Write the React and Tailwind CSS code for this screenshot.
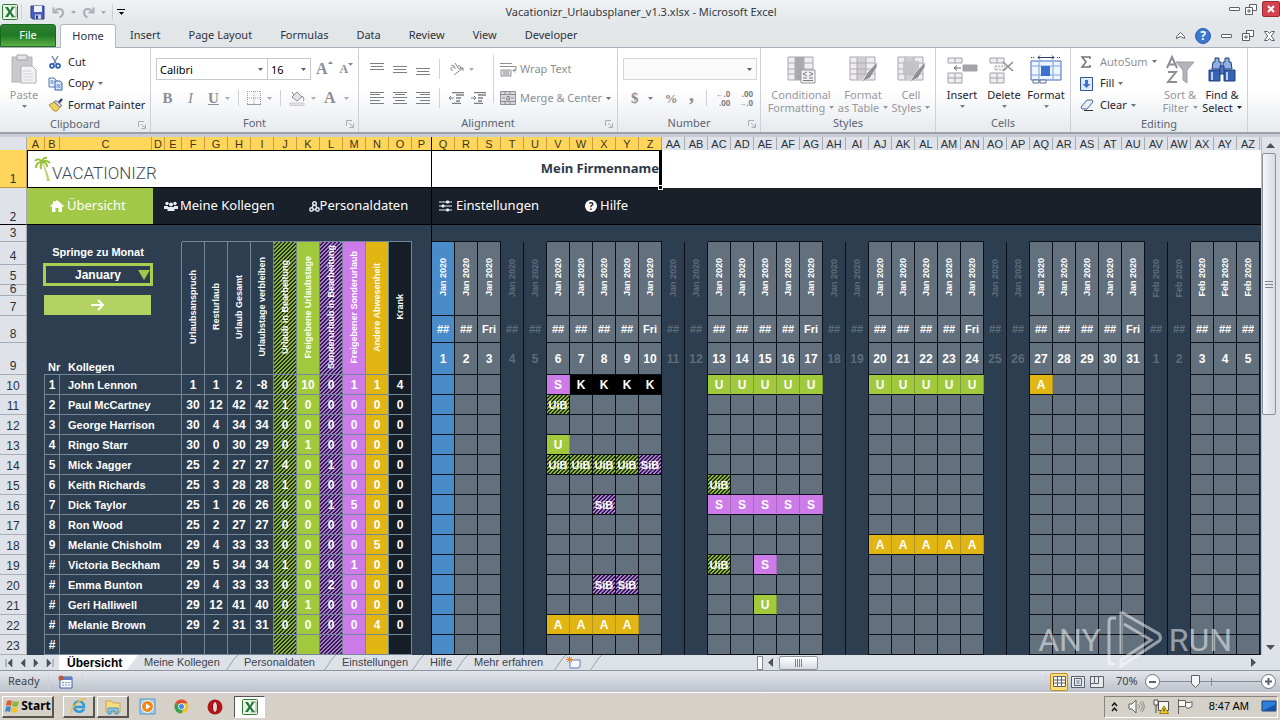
import React from 'react'
import clsx from 'clsx'

const TAB_NAMES = ['Insert', 'Page Layout', 'Formulas', 'Data', 'Review', 'View', 'Developer']

const LEFT_COLUMNS = [
  { letter: 'F', title: 'Urlaubsanspruch', bg: '' },
  { letter: 'G', title: 'Resturlaub', bg: '' },
  { letter: 'H', title: 'Urlaub Gesamt', bg: '' },
  { letter: 'I', title: 'Urlaubstage verbleiben', bg: '' },
  { letter: 'J', title: 'Urlaub in Bearbeitung', bg: 'bg-[linear-gradient(135deg,#8fb43a_25%,#22331f_25%,#22331f_50%,#8fb43a_50%,#8fb43a_75%,#22331f_75%)] bg-[size:4px_4px]' },
  { letter: 'K', title: 'Freigebene Urlaubstage', bg: 'bg-[#a1c93c]' },
  { letter: 'L', title: 'Sonderurlaub in Bearbeitung', bg: 'bg-[linear-gradient(135deg,#a57fcb_25%,#35194f_25%,#35194f_50%,#a57fcb_50%,#a57fcb_75%,#35194f_75%)] bg-[size:4px_4px]' },
  { letter: 'M', title: 'Freigebener Sonderurlaub', bg: 'bg-[#cc7be8]' },
  { letter: 'N', title: 'Andere Abwesenheit', bg: 'bg-[#e1b612]' },
  { letter: 'O', title: 'Krank', bg: 'bg-[#151e26]' },
]

const CODE_STYLES = {
  U: 'bg-[#a1c93c] border-r-[#7f9d3c]',
  S: 'bg-[#cc7be8] border-r-[#a56cbb]',
  A: 'bg-[#e1b612] border-r-[#b39425]',
  K: 'bg-black border-r-black',
  UiB: 'bg-[linear-gradient(135deg,#8fb43a_25%,#22331f_25%,#22331f_50%,#8fb43a_50%,#8fb43a_75%,#22331f_75%)] bg-[size:4px_4px] border-r-[#0b0f18]',
  SiB: 'bg-[linear-gradient(135deg,#a57fcb_25%,#35194f_25%,#35194f_50%,#a57fcb_50%,#a57fcb_75%,#35194f_75%)] bg-[size:4px_4px] border-r-[#0b0f18]',
}

// entries: [first day column, last day column, code]
const PEOPLE = [
  { nr: '1', name: 'John Lennon', values: [1, 1, 2, -8, 0, 10, 0, 1, 1, 4], entries: [[5, 5, 'S'], [6, 9, 'K'], [12, 16, 'U'], [19, 23, 'U'], [26, 26, 'A']] },
  { nr: '2', name: 'Paul McCartney', values: [30, 12, 42, 42, 1, 0, 0, 0, 0, 0], entries: [[5, 5, 'UiB']] },
  { nr: '3', name: 'George Harrison', values: [30, 4, 34, 34, 0, 0, 0, 0, 0, 0], entries: [] },
  { nr: '4', name: 'Ringo Starr', values: [30, 0, 30, 29, 0, 1, 0, 0, 0, 0], entries: [[5, 5, 'U']] },
  { nr: '5', name: 'Mick Jagger', values: [25, 2, 27, 27, 4, 0, 1, 0, 0, 0], entries: [[5, 8, 'UiB'], [9, 9, 'SiB']] },
  { nr: '6', name: 'Keith Richards', values: [25, 3, 28, 28, 1, 0, 0, 0, 0, 0], entries: [[12, 12, 'UiB']] },
  { nr: '7', name: 'Dick Taylor', values: [25, 1, 26, 26, 0, 0, 1, 5, 0, 0], entries: [[7, 7, 'SiB'], [12, 16, 'S']] },
  { nr: '8', name: 'Ron Wood', values: [25, 2, 27, 27, 0, 0, 0, 0, 0, 0], entries: [] },
  { nr: '9', name: 'Melanie Chisholm', values: [29, 4, 33, 33, 0, 0, 0, 0, 5, 0], entries: [[19, 23, 'A']] },
  { nr: '#', name: 'Victoria Beckham', values: [29, 5, 34, 34, 1, 0, 0, 1, 0, 0], entries: [[12, 12, 'UiB'], [14, 14, 'S']] },
  { nr: '#', name: 'Emma Bunton', values: [29, 4, 33, 33, 0, 0, 2, 0, 0, 0], entries: [[7, 8, 'SiB']] },
  { nr: '#', name: 'Geri Halliwell', values: [29, 12, 41, 40, 0, 1, 0, 0, 0, 0], entries: [[14, 14, 'U']] },
  { nr: '#', name: 'Melanie Brown', values: [29, 2, 31, 31, 0, 0, 0, 0, 4, 0], entries: [[5, 8, 'A']] },
  { nr: '#', name: '', values: ['', '', '', '', '', '', '', '', '', ''], entries: [] },
]

const DAYS = Array.from({ length: 36 }, (_, i) => {
  const weekday = (i + 2) % 7
  return {
    letter: i < 10 ? String.fromCharCode(81 + i) : 'A' + String.fromCharCode(55 + i),
    month: i < 31 ? 'Jan 2020' : 'Feb 2020',
    date: i < 31 ? i + 1 : i - 30,
    label: weekday === 4 ? 'Fri' : '##',
    weekend: weekday > 4,
    holiday: i === 0,
  }
})

const dayClass = (day) =>
  clsx(
    'border-r border-r-[#0b0f18] p-0 text-center',
    day.weekend && 'bg-[#2d3e50] text-[#5d6c7b]',
    !day.weekend && 'border-b border-b-[#0b0f18] text-white',
    !day.weekend && (day.holiday ? 'bg-[#4a8bca]' : 'bg-[#63707d]')
  )

/* ---------- small pieces ---------- */

const Caret = ({ className }) => (
  <svg viewBox="0 0 5 3" className={clsx('h-[3px] w-[5px] shrink-0', className)} fill="currentColor">
    <path d="M0 0h5L2.500 3z" />
  </svg>
)

const Divider = ({ className }) => <span className={clsx('w-px shrink-0 bg-[#cfd3d8]', className)} />

const Launcher = () => (
  <svg viewBox="0 0 8 8" className="h-2 w-2" fill="none" stroke="#a9adb3">
    <path d="M.5 6V.5H6M3 3l4 4M7.500 3.500v4h-4" />
  </svg>
)

const Group = ({ label, width, launcher, children }) => (
  <section aria-label={label} className={clsx('flex shrink-0 flex-col border-r border-[#cdd1d7]', width)}>
    <div className="flex h-[68px] pt-[3px]">{children}</div>
    <div className="relative flex h-[18px] items-center justify-center text-[#5b6471]">
      {label}
      {launcher && (
        <button aria-label={`${label} options`} className="absolute right-1 bottom-1">
          <Launcher />
        </button>
      )}
    </div>
  </section>
)

const BigButton = ({ icon, lines, width, muted, caretBelow }) => (
  <button className={clsx('flex shrink-0 flex-col items-center', width, muted ? 'text-[#94989e]' : 'text-[#1f252d]')}>
    <span className="flex h-[37px] items-center">{icon}</span>
    <span className="leading-[13px] whitespace-nowrap">{lines[0]}</span>
    {caretBelow ? (
      <Caret className="mt-1 text-[#777b82]" />
    ) : (
      <span className="flex items-center gap-1 leading-[13px] whitespace-nowrap">
        {lines[1]}
        <Caret />
      </span>
    )}
  </button>
)

const SmallButton = ({ icon, label, muted, caret }) => (
  <button className={clsx('flex h-[22px] items-center whitespace-nowrap', muted ? 'text-[#8b9096]' : 'text-[#1f252d]')}>
    <span className="flex w-5 items-center">{icon}</span>
    {label}
    {caret && <Caret className="ml-1 text-[#6b7078]" />}
  </button>
)

/* ---------- icons ---------- */

const ExcelIcon = () => (
  <svg viewBox="0 0 16 16" className="h-4 w-4">
    <rect x=".5" y=".5" width="15" height="15" rx="1" fill="#e9f4e6" stroke="#2e7d32" />
    <path d="M9 3h5v10H9" fill="#fff" stroke="#7fb57f" />
    <path d="M3 3h3l2 3.500L10 3h2.500L9.300 8l3.500 5H10L8 9.800 6 13H3l3.500-5z" fill="#1f7a34" />
  </svg>
)

const SaveIcon = () => (
  <svg viewBox="0 0 15 15" className="h-[15px] w-[15px]">
    <path d="M1 1h13v13H2.500L1 12.500z" fill="#4a5cc0" stroke="#2b3a8c" />
    <path d="M4 1h8v6H4z" fill="#eef2fb" />
    <path d="M5 9.500h6V14H5z" fill="#cdd5ea" />
    <path d="M6 10.500h2V14H6z" fill="#2b3a8c" />
  </svg>
)

const UndoIcon = ({ flip }) => (
  <svg viewBox="0 0 13 13" className={clsx('h-[13px] w-[13px]', flip && '-scale-x-100')} fill="none" stroke="#abafb5" strokeWidth="2">
    <path d="M3 5.500C5 2 11 2 11 6.500c0 2-1.500 4-3.500 5" />
    <path d="M1.500 1.500v5h5" />
  </svg>
)

const PasteIcon = () => (
  <svg viewBox="0 0 28 32" className="h-8 w-7">
    <path d="M2 3h20v25H2z" fill="#c9c9cd" stroke="#b2b2b6" />
    <path d="M7 1h10v5H7z" fill="#e3e3e5" stroke="#a5a5a9" />
    <path d="M11 12h11l4 4v13H11z" fill="#f4f4f6" stroke="#b0b0b4" />
    <path d="M13 17h8M13 20h10M13 23h10M13 26h10" stroke="#d0d0d4" />
  </svg>
)

const CutIcon = () => (
  <svg viewBox="0 0 14 14" className="h-[14px] w-[14px]" fill="none">
    <path d="M4 1l4.500 8M10 1L5.500 9" stroke="#7b8ba6" strokeWidth="1.500" />
    <circle cx="4" cy="10.800" r="2" stroke="#2c5fb3" strokeWidth="1.700" />
    <circle cx="10" cy="10.800" r="2" stroke="#2c5fb3" strokeWidth="1.700" />
  </svg>
)

const CopyIcon = () => (
  <svg viewBox="0 0 15 14" className="h-[14px] w-[15px]">
    <path d="M1 1h5l2 2v7H1z" fill="#eaf1fc" stroke="#4d78ba" />
    <path d="M7 4h5l2 2v7H7z" fill="#dbe8fb" stroke="#2f5fab" />
    <path d="M2.500 4h3M2.500 6h3M8.500 8h4M8.500 10h4" stroke="#4d78ba" />
  </svg>
)

const PainterIcon = () => (
  <svg viewBox="0 0 16 14" className="h-[14px] w-4">
    <path d="M1 7l5-3 6 5-3 4H6z" fill="#f0d060" stroke="#b58f2c" />
    <path d="M6 4l2-1.500 6 5L12 9z" fill="#d9d9e4" stroke="#7b7b90" />
    <path d="M11 4.500L14 1" stroke="#3f3f66" strokeWidth="2.500" />
  </svg>
)

const GridIcon = ({ brush, rules }) => (
  <svg viewBox="0 0 32 30" className="h-[30px] w-8">
    <path d="M3 2h25v23H3z" fill="#efedf0" stroke="#a9a7ad" />
    <path d="M10 2h9v23h-9z" fill={rules ? '#a9a9ad' : '#cfcdd2'} />
    <path d="M3 8h25M3 14h25M3 19h25M10 2v23M19 2v23" stroke="#aeacb2" />
    {brush && <path d="M8 6h16v13H8z" fill="#c3c2c7" />}
    {rules && (
      <g>
        <path d="M16 15h14v13H16z" fill="#f1f0f3" stroke="#99979d" />
        <path d="M22 17l-4 2 4 2M18 23h4M24 17l4 2-4 2M24 23h4M18 25.500h10" stroke="#7d7b82" fill="none" />
      </g>
    )}
    {!rules && <path d="M30 7L20 18l-5 9 8-4 7-11z" fill="#919096" stroke="#fff" strokeWidth=".6" />}
  </svg>
)

const InsertIcon = ({ remove }) => (
  <svg viewBox="0 0 32 28" className="h-7 w-8" fill="#efeef1" stroke="#a3a1a8">
    <path d="M2 2h14v5H2zM9 2v5M2 17h14v10H2zM9 17v10M2 22h14" />
    {remove ? (
      <g>
        <path d="M7 10h10v4H7z" strokeDasharray="2 1" />
        <path d="M15 6l10 9M25 6l-10 9" stroke="#8f8d94" strokeWidth="1.600" />
      </g>
    ) : (
      <g>
        <path d="M17 9h14v6H17z" fill="#a5a4a9" />
        <path d="M15 12H8M11 9.500L8 12l3 2.500" stroke="#66646c" fill="none" />
      </g>
    )}
  </svg>
)

const FormatIcon = () => (
  <svg viewBox="0 0 32 30" className="h-[30px] w-8">
    <path d="M1 2.500h4M27 2.500h4" stroke="#2d3f63" strokeDasharray="1 1" />
    <path d="M8 2.500h16M10 .5L8 2.500l2 2M22 .5l2 2-2 2" stroke="#2d3f63" fill="none" />
    <path d="M1 6h30v19H1z" fill="#eef5ff" stroke="#3f6fc0" />
    <path d="M1 11h30M1 20h30M9 6v19M23 6v19" stroke="#7ea3da" />
    <path d="M11 11h9v10h-9z" fill="#3b72d2" />
    <path d="M3 25h6v3H3zM10 25h6v3h-6z" fill="#fff" stroke="#5b6f96" />
  </svg>
)

const SortIcon = () => (
  <svg viewBox="0 0 30 30" className="h-[30px] w-[30px]" fill="none">
    <path d="M11 7h18l-7 8v13l-4-3V15z" fill="#b5b3b9" stroke="#9d9ba1" />
    <path d="M2 13L7 2l5 11M4 9.500h6M3 17h8L3 27h9" stroke="#8f8d94" strokeWidth="2" />
  </svg>
)

const FindIcon = () => (
  <svg viewBox="0 0 28 28" className="h-7 w-7" stroke="#203f7c">
    <path d="M7 2h4v4h2v7H4l1-7h2zM17 2h4v4h2l1 7h-9V6h2z" fill="#8fb0e4" />
    <path d="M1 14h11v11H1zM16 14h11v11H16z" fill="#3763b4" />
    <path d="M12 10h4v8h-4z" fill="#4c78c6" />
    <path d="M4 16v8M19 16v8" stroke="#b8cef2" strokeWidth="2" />
  </svg>
)

const LinesIcon = ({ rows }) => (
  <svg viewBox="0 0 14 12" className="h-3 w-[14px]" stroke="#7b7f85">
    {rows.map(([x, y, w]) => (
      <path key={y} d={`M${x} ${y}.5h${w}`} />
    ))}
  </svg>
)

const ALIGN_TOP = [
  [[0, 0, 14], [1, 3, 12], [0, 6, 14]],
  [[0, 3, 14], [1, 6, 12], [0, 9, 14]],
  [[0, 5, 14], [1, 8, 12], [0, 11, 14]],
]
const ALIGN_BOTTOM = [
  [[0, 0, 14], [0, 2, 10], [0, 5, 14], [0, 8, 10], [0, 11, 14]],
  [[0, 0, 14], [2, 2, 10], [0, 5, 14], [2, 8, 10], [0, 11, 14]],
  [[0, 0, 14], [4, 2, 10], [0, 5, 14], [4, 8, 10], [0, 11, 14]],
]

const IndentIcon = ({ out }) => (
  <svg viewBox="0 0 16 12" className="h-3 w-4" stroke="#7b7f85" fill="none">
    <path d="M3 .5h12M7 3h8M7 6h5M7 9h4M3 11.500h9" strokeWidth="1.300" />
    <path d={out ? 'M5 6H0M2 4L0 6l2 2' : 'M0 6h5M3 4l2 2-2 2'} />
  </svg>
)

const WindowButtons = () => (
  <>
    <button aria-label="Minimize" className="h-1 w-[11px] rounded-[1px] border border-[#5b6068] bg-white" />
    <button aria-label="Restore">
      <svg viewBox="0 0 12 11" className="h-[11px] w-3" fill="#fff" stroke="#5b6068">
        <path d="M4.500.5h7v6h-7z" />
        <path d="M.5 3.500h7v7h-7zM3 6h2v2H3z" />
      </svg>
    </button>
  </>
)

/* ---------- ribbon ---------- */

const TitleBar = () => (
  <header className="flex h-6 items-center bg-linear-to-b from-[#eff2f4] to-[#e3e7ea]">
    <div className="flex flex-1 items-center pl-[2px]">
      <ExcelIcon />
      <Divider className="mx-[3px] h-4 bg-[#9da2a8]" />
      <button aria-label="Save" className="ml-1 p-px"><SaveIcon /></button>
      <button aria-label="Undo" className="ml-[6px]"><UndoIcon /></button>
      <Caret className="ml-[6px] text-[#a4a8ad]" />
      <button aria-label="Redo" className="ml-[6px]"><UndoIcon flip /></button>
      <Caret className="ml-[6px] text-[#a4a8ad]" />
      <Divider className="ml-[6px] h-4 bg-[#9da2a8]" />
      <button aria-label="Customize toolbar" className="ml-1 flex flex-col items-center gap-[2px]">
        <span className="h-px w-2 bg-black" />
        <Caret className="text-black" />
      </button>
    </div>
    <h1 className="text-[#333a42]">Vacationizr_Urlaubsplaner_v1.3.xlsx - Microsoft Excel</h1>
    <div className="flex flex-1 items-center justify-end gap-[5px] self-start pt-px">
      <WindowButtons />
      <button aria-label="Close" className="flex h-4 w-[18px] items-center justify-center rounded-[2px] border border-[#9c2a33] bg-[#d5434e]">
        <svg viewBox="0 0 8 8" className="h-2 w-2" stroke="#fff" strokeWidth="2"><path d="M1 1l6 6M7 1L1 7" /></svg>
      </button>
    </div>
  </header>
)

const RibbonTabs = () => (
  <nav className="flex h-6 items-stretch border-b border-[#a9b0b9] bg-[#e2e6e9] text-[#2d333b]">
    <button className="mr-1 w-14 rounded-t-[3px] border border-[#1b6a22] bg-linear-to-b from-[#2c7f30] via-[#1f7a26] to-[#5cb044] text-white">File</button>
    <button className="-mb-px w-14 rounded-t-[3px] border border-b-0 border-[#b4bac2] bg-white">Home</button>
    {TAB_NAMES.map((name) => (
      <button key={name} className="px-[14px]">{name}</button>
    ))}
    <div className="ml-auto flex items-center gap-[10px] pr-[5px]">
      <button aria-label="Collapse ribbon">
        <svg viewBox="0 0 9 7" className="h-[7px] w-[9px]" fill="#fff" stroke="#5b6068"><path d="M.5 4.500l4-4 4 4v2l-4-2-4 2z" /></svg>
      </button>
      <button aria-label="Help" className="flex h-4 w-4 items-center justify-center rounded-full border border-[#2a5db0] bg-[#3c76cf] text-xs leading-none font-bold text-white">?</button>
      <WindowButtons />
      <button aria-label="Close workbook">
        <svg viewBox="0 0 11 10" className="h-[10px] w-[11px]" fill="#fff" stroke="#5b6068">
          <path d="M.5.5h3l2 2 2-2h3L7.300 5l3.200 4.500h-3l-2-2-2 2h-3L3.700 5z" />
        </svg>
      </button>
    </div>
  </nav>
)

const serifGlyph = "font-['Liberation_Serif',serif] leading-none text-[#8a8e94]"

const Ribbon = () => (
  <div className="flex h-[86px] overflow-hidden border-b-2 border-[#9aa0aa] bg-linear-to-b from-white via-white to-[#e6eaee]">
    <Group label="Clipboard" width="w-[151px]" launcher>
      <BigButton icon={<PasteIcon />} lines={['Paste']} width="w-12" muted caretBelow />
      <div className="flex flex-col">
        <SmallButton icon={<CutIcon />} label="Cut" />
        <SmallButton icon={<CopyIcon />} label="Copy" caret />
        <SmallButton icon={<PainterIcon />} label="Format Painter" />
      </div>
    </Group>

    <Group label="Font" width="w-[208px]" launcher>
      <div className="flex flex-1 flex-col pt-[7px] pl-[5px]">
        <div className="flex h-[22px] items-center">
          <label className="relative flex">
            <input aria-label="Font name" defaultValue="Calibri" className="h-[22px] w-[112px] border border-[#c6cad0] bg-white px-[3px] text-black" />
            <Caret className="absolute top-[10px] right-[5px] text-[#5b6068]" />
          </label>
          <label className="relative -ml-px flex">
            <input aria-label="Font size" defaultValue="16" className="h-[22px] w-11 border border-[#c6cad0] bg-white px-[3px] text-black" />
            <Caret className="absolute top-[10px] right-[5px] text-[#5b6068]" />
          </label>
          <button aria-label="Grow font" className={clsx('ml-[5px] flex text-base font-bold', serifGlyph)}>
            A<Caret className="rotate-180" />
          </button>
          <button aria-label="Shrink font" className={clsx('ml-[7px] flex text-xs font-bold', serifGlyph)}>
            A<Caret />
          </button>
        </div>
        <div className="mt-2 flex h-5 items-center">
          <button className={clsx('w-[23px] text-[15px] font-bold', serifGlyph)}>B</button>
          <button className={clsx('w-[23px] text-[15px] italic', serifGlyph)}>I</button>
          <button className={clsx('w-[23px] text-[15px] font-bold underline', serifGlyph)}>U</button>
          <Caret className="text-[#a9adb2]" />
          <Divider className="mx-[8px] h-4" />
          <button aria-label="Borders">
            <svg viewBox="0 0 14 14" className="h-[14px] w-[14px]" stroke="#9b9fa5" fill="none">
              <path d="M.5 0v14M7 0v14M13.500 0v14M0 .5h14M0 7h14" strokeDasharray="1 1" />
              <path d="M0 13.500h14" />
            </svg>
          </button>
          <Caret className="ml-[6px] text-[#a9adb2]" />
          <Divider className="mx-[8px] h-4" />
          <button aria-label="Fill color">
            <svg viewBox="0 0 16 15" className="h-[15px] w-4" stroke="#8d9197" fill="#e4e4e8">
              <path d="M3 6l5-5 5 5-5 4zM5 4L3 1M13 5c2 1 2 3 1.500 5" />
              <path d="M1 12h14v2.500H1z" fill="#e1e1e4" stroke="#d0d0d4" />
            </svg>
          </button>
          <Caret className="ml-[6px] text-[#a9adb2]" />
          <button aria-label="Font color" className={clsx('ml-2 text-base font-bold', serifGlyph)}>A</button>
          <Caret className="ml-2 text-[#a9adb2]" />
        </div>
      </div>
    </Group>

    <Group label="Alignment" width="w-[259px]" launcher>
      <div className="flex flex-col pt-[7px] pl-[11px]">
        <div className="flex h-[22px] items-center gap-[9px]">
          {ALIGN_TOP.map((rows, i) => (
            <button key={i} aria-label={['Top', 'Middle', 'Bottom'][i]}><LinesIcon rows={rows} /></button>
          ))}
          <Divider className="h-5" />
          <button aria-label="Orientation" className="flex items-center gap-1">
            <svg viewBox="0 0 16 14" className="h-[14px] w-4" fill="none" stroke="#85898f">
              <path d="M2 4c2-2 4 0 4 3M5 5c-4 0-4 4-1 3M6 1l4 6c3 0 2-4-1-3M5 13l9-7M11 6h3v3" />
            </svg>
            <Caret className="text-[#a9adb2]" />
          </button>
        </div>
        <div className="mt-2 flex h-5 items-center gap-[9px]">
          {ALIGN_BOTTOM.map((rows, i) => (
            <button key={i} aria-label={['Left', 'Center', 'Right'][i]}><LinesIcon rows={rows} /></button>
          ))}
          <Divider className="h-5" />
          <button aria-label="Decrease indent"><IndentIcon out /></button>
          <button aria-label="Increase indent" className="-ml-[3px]"><IndentIcon /></button>
        </div>
      </div>
      <Divider className="mt-1 ml-[6px] h-12" />
      <div className="flex flex-col pt-[7px] pl-[6px]">
        <SmallButton
          muted
          label="Wrap Text"
          icon={
            <svg viewBox="0 0 17 15" className="h-[15px] w-[17px]" fill="#e4e4e8" stroke="#8d9197">
              <path d="M1 8h10v6H1zM3 10h6M3 12h6" />
              <path d="M0 1.500h12M0 4.500h16v4h-3M15 6.500l-2 2 2 2" fill="none" />
            </svg>
          }
        />
        <div className="mt-[7px]">
          <SmallButton
            muted
            caret
            label="Merge & Center"
            icon={
              <svg viewBox="0 0 16 14" className="h-[14px] w-4" fill="#d8d8dc" stroke="#8d9197">
                <path d="M.5.5h15v13H.5zM.5 3.500h15M.5 10.500h15M5 .5v3M10 .5v3M5 10.500v3M10 10.500v3M2 7h3M11 7h3M6.500 5.500h3V9h-3V7h3" />
              </svg>
            }
          />
        </div>
      </div>
    </Group>

    <Group label="Number" width="w-[143px]" launcher>
      <div className="flex flex-1 flex-col px-[5px] pt-[7px]">
        <label className="relative flex">
          <input aria-label="Number format" className="h-[22px] w-[134px] border border-[#d3d6da] bg-[#fafafa] px-1" />
          <Caret className="absolute top-[10px] right-[5px] text-[#5b6068]" />
        </label>
        <div className="mt-2 flex h-5 items-center text-[#7b7f85]">
          <button className={clsx('ml-2 text-[15px] font-bold', serifGlyph)}>$</button>
          <Caret className="ml-[9px]" />
          <button className={clsx('ml-3 text-[13px] font-bold', serifGlyph)}>%</button>
          <button className={clsx('ml-[9px] w-[10px] pb-2 text-xl font-bold', serifGlyph)}>,</button>
          <Divider className="mx-[9px] h-4" />
          <button className="text-right text-[8px] leading-[9px] font-bold">
            <span className="block">←.0</span>
            <span className="block">.00</span>
          </button>
          <button className="ml-2 text-right text-[8px] leading-[9px] font-bold">
            <span className="block">.00</span>
            <span className="block">→.0</span>
          </button>
        </div>
      </div>
    </Group>

    <Group label="Styles" width="w-[175px]">
      <div className="flex pl-1">
        <BigButton icon={<GridIcon rules />} lines={['Conditional', 'Formatting']} width="w-[72px]" muted />
        <BigButton icon={<GridIcon />} lines={['Format', 'as Table']} width="w-[52px]" muted />
        <BigButton icon={<GridIcon brush />} lines={['Cell', 'Styles']} width="w-11" muted />
      </div>
    </Group>

    <Group label="Cells" width="w-[135px]">
      <div className="flex pl-[5px]">
        <BigButton icon={<InsertIcon />} lines={['Insert']} width="w-[42px]" caretBelow />
        <BigButton icon={<InsertIcon remove />} lines={['Delete']} width="w-[42px]" caretBelow />
        <BigButton icon={<FormatIcon />} lines={['Format']} width="w-[42px]" caretBelow />
      </div>
    </Group>

    <Group label="Editing" width="w-[177px]">
      <div className="flex w-[88px] flex-col pl-[9px]">
        <SmallButton
          muted
          caret
          label="AutoSum"
          icon={<svg viewBox="0 0 12 12" className="h-3 w-3" fill="none" stroke="#6f737a" strokeWidth="1.500"><path d="M10 3V1H2l4 5-4 5h8V9" /></svg>}
        />
        <SmallButton
          caret
          label="Fill"
          icon={
            <svg viewBox="0 0 14 14" className="h-[14px] w-[14px]">
              <path d="M.5.5h12v13H.5z" fill="#dfeafb" stroke="#2e5799" />
              <path d="M5 3h3v4h2.500l-4 4-4-4H5z" fill="#3a74d0" />
            </svg>
          }
        />
        <SmallButton
          caret
          label="Clear"
          icon={
            <svg viewBox="0 0 14 12" className="h-3 w-[14px]">
              <path d="M1 8l6-7h5l1 2-6 7H2z" fill="#e6eefa" stroke="#4a6390" />
              <path d="M4 11.500h9" stroke="#333" />
            </svg>
          }
        />
      </div>
      <BigButton icon={<SortIcon />} lines={['Sort &', 'Filter']} width="w-[42px]" muted />
      <BigButton icon={<FindIcon />} lines={['Find &', 'Select']} width="w-[42px]" />
    </Group>
  </div>
)

/* ---------- sheet ---------- */

const colHead = (selected) =>
  clsx(
    'h-[13px] border-r p-0 text-[11px] leading-[12px] font-normal',
    selected ? 'border-[#c79d3b] bg-[#ffd65c] text-[#3f3417]' : 'border-[#a7adb5] bg-[#dfe3e9] text-[#2b3138]'
  )

const RowHead = ({ n, size = 'h-5 leading-[11px]', selected, last }) => (
  <th
    scope="row"
    className={clsx(
      'border-r border-b px-0 pt-0 pb-[2px] align-bottom text-xs font-normal text-[#2b3138]',
      size,
      selected ? 'border-[#c79d3b] bg-[#ffd65c]' : 'border-[#a7adb5] bg-[#dfe3e9]',
      last && 'border-b-black'
    )}
  >
    {n}
  </th>
)

const Vertical = ({ children }) => (
  <span className="inline-block rotate-180 text-[9px] leading-[14px] font-bold whitespace-nowrap [writing-mode:vertical-rl]">
    {children}
  </span>
)

const NavItem = ({ label, icon, className }) => (
  <a href="#" className={clsx('flex h-full items-center text-white', className)}>
    {icon}
    {label}
  </a>
)

const PalmLogo = () => (
  <span className="flex h-9 items-end pl-[6px]">
    <svg viewBox="0 0 18 26" className="mb-[5px] h-[26px] w-[18px]" fill="none" stroke="#9ac23c" strokeWidth="2">
      <path d="M8 7c2 5 4 9 5 18l3 0C14 18 12 12 9 7z" fill="#b9d46c" stroke="none" />
      <path d="M8 6C5 2 3 3 1 5M8 6C4 6 2 8 2 12M8 6c-1 2-2 4-1 7M8 6c0-3 3-5 5-4M8 6c3-2 6-1 8 1M8 6c3 0 5 2 5 5" />
    </svg>
    <span className="mb-[3px] font-['Roboto',sans-serif] text-[17px] leading-[22px] font-light text-[#3f4955]">VACATIONIZR</span>
  </span>
)

const Sheet = () => (
  <table className="w-full table-fixed border-separate border-spacing-0 bg-[#2d3e50] font-['Liberation_Sans',sans-serif]">
    <colgroup>
      <col className="w-[27px]" />
      <col className="w-[18px]" />
      <col className="w-[15px]" />
      <col className="w-[92px]" />
      <col className="w-[13px]" />
      <col className="w-[17px]" />
      {LEFT_COLUMNS.map((c) => <col key={c.letter} className="w-[23px]" />)}
      <col className="w-5" />
      {DAYS.map((d) => <col key={d.letter} className="w-[23px]" />)}
      <col />
    </colgroup>
    <thead>
      <tr>
        <td className="border-r border-[#a7adb5] bg-[#dfe3e9] p-0" />
        {['A', 'B', 'C', 'D', 'E'].map((l) => <th key={l} className={colHead(true)}>{l}</th>)}
        {LEFT_COLUMNS.map((c) => <th key={c.letter} className={colHead(true)}>{c.letter}</th>)}
        <th className={clsx(colHead(true), 'border-r-black')}>P</th>
        {DAYS.map((d, i) => <th key={d.letter} className={colHead(i < 10)}>{d.letter}</th>)}
        <td className="bg-[#dfe3e9] p-0" />
      </tr>
    </thead>
    <tbody>
      <tr>
        <RowHead n="1" size="h-[38px] leading-[11px]" selected />
        <td colSpan={16} className="border border-black bg-white p-0"><PalmLogo /></td>
        <td colSpan={10} className="relative border-y border-r-[3px] border-black bg-white p-0 text-right font-['Noto_Sans',sans-serif] text-[13px] font-bold text-[#2d3a4a]">
          Mein Firmenname
          <span className="absolute -right-[4px] -bottom-[3px] h-[5px] w-[5px] border border-white bg-black" />
        </td>
        <td colSpan={27} className="bg-white p-0" />
      </tr>
      <tr className="bg-[#19202a] font-['Noto_Sans',sans-serif] text-[13px]">
        <RowHead n="2" size="h-[37px] leading-[11px]" last />
        <td colSpan={16} className="border-r border-b border-black p-0">
          <nav className="flex h-9">
            <NavItem
              label="Übersicht"
              className="w-[126px] gap-[3px] bg-[#a1c846] pl-[23px]"
              icon={<svg viewBox="0 0 14 12" className="h-3 w-[14px]" fill="#fff"><path d="M7 0l7 6-1 1-1-.8V12H8.500V8h-3v4H2V6.200L1 7 0 6l3-2.500V1h1.500v1.200z" /></svg>}
            />
            <NavItem
              label="Meine Kollegen"
              className="gap-[2px] pl-[11px]"
              icon={
                <svg viewBox="0 0 14 10" className="h-[10px] w-[14px]" fill="#e8edf2">
                  <circle cx="3" cy="2.500" r="1.700" /><circle cx="11" cy="2.500" r="1.700" /><circle cx="7" cy="3.500" r="2" />
                  <path d="M0 5h4v3H0zM10 5h4v3h-4zM3.500 6h7v4h-7z" />
                </svg>
              }
            />
            <NavItem
              label="Personaldaten"
              className="pl-[34px]"
              icon={
                <svg viewBox="0 0 11 11" className="h-[11px] w-[11px]" fill="none" stroke="#e8edf2" strokeWidth="1.400">
                  <circle cx="5.500" cy="2.500" r="1.800" /><circle cx="2.500" cy="8.500" r="1.700" /><circle cx="8.500" cy="8.500" r="1.700" />
                  <path d="M4.500 4L3 7M6.500 4L8 7M4 8.500h3" />
                </svg>
              }
            />
          </nav>
        </td>
        <td colSpan={37} className="border-b border-black p-0">
          <nav className="flex h-9 pl-[7px]">
            <NavItem
              label="Einstellungen"
              className="gap-1"
              icon={
                <svg viewBox="0 0 13 12" className="h-3 w-[13px]" fill="#e8edf2" stroke="#e8edf2">
                  <path d="M0 2h13M0 6h13M0 10h13" /><path d="M7.500 1h2v2h-2zM3 5h2v2H3zM7.500 9h2v2h-2z" />
                </svg>
              }
            />
            <NavItem
              label="Hilfe"
              className="gap-[3px] pl-[46px]"
              icon={<span className="flex h-3 w-3 items-center justify-center rounded-full bg-white text-[10px] leading-none font-bold text-[#19202a]">?</span>}
            />
          </nav>
        </td>
      </tr>
      <tr>
        <RowHead n="3" size="h-[17px] leading-[11px]" />
        <td colSpan={5} className="p-0" />
        {LEFT_COLUMNS.map((c) => <td key={c.letter} className="border-b border-[#74869a] p-0" />)}
        <td className="border-r border-r-black p-0" />
        {DAYS.map((d) => <td key={d.letter} className={clsx('p-0', !d.weekend && 'border-b border-[#0b0f18]')} />)}
        <td className="p-0" />
      </tr>
      <tr>
        <RowHead n="4" size="h-[23px] leading-[11px]" />
        <td colSpan={5} rowSpan={6} className="border-r border-[#74869a] p-0 align-top text-white">
          <div className="flex h-[133px] flex-col pt-[3px] text-[11px] font-bold">
            <label htmlFor="month" className="ml-4 w-[110px] text-center leading-[15px]">Springe zu Monat</label>
            <div className="relative mt-[3px] ml-4 w-[110px]">
              <select id="month" defaultValue="January" className="h-[23px] w-full appearance-none border-[3px] border-[#a9cf52] bg-[#2d3e50] text-center text-xs leading-none font-bold text-white">
                <option>January</option>
                <option>February</option>
                <option>March</option>
              </select>
              <svg viewBox="0 0 12 10" className="pointer-events-none absolute top-[7px] right-[3px] h-[10px] w-3" fill="#a1c846"><path d="M0 0h12L6 10z" /></svg>
            </div>
            <button aria-label="Go to month" className="mt-[9px] ml-[17px] flex h-5 w-[107px] items-center justify-center bg-[#b1d263]">
              <svg viewBox="0 0 14 12" className="h-3 w-[14px]" fill="none" stroke="#fff" strokeWidth="2"><path d="M0 6h12M7 1l5 5-5 5" /></svg>
            </button>
            <div className="mt-auto ml-[17px] flex border-b border-[#74869a] pl-1 leading-[14px]">
              <span className="w-5">Nr</span>
              <span>Kollegen</span>
            </div>
          </div>
        </td>
        {LEFT_COLUMNS.map((c) => (
          <td key={c.letter} rowSpan={6} className={clsx('border-r border-b border-[#74869a] p-0 text-center leading-none text-white', c.bg)}>
            <Vertical>{c.title}</Vertical>
          </td>
        ))}
        <td rowSpan={20} className="border-r border-black p-0" />
        {DAYS.map((d) => (
          <td key={d.letter} rowSpan={4} className={clsx(dayClass(d), 'leading-none')}>
            <Vertical>{d.month}</Vertical>
          </td>
        ))}
        <td className="p-0" />
      </tr>
      <tr><RowHead n="5" /></tr>
      <tr><RowHead n="6" size="h-[11px] leading-[8px]" /></tr>
      <tr><RowHead n="7" /></tr>
      <tr className="text-[11px] font-bold">
        <RowHead n="8" size="h-[27px] leading-[11px]" />
        {DAYS.map((d) => <td key={d.letter} className={dayClass(d)}>{d.label}</td>)}
      </tr>
      <tr className="text-xs font-bold">
        <RowHead n="9" size="h-[32px] leading-[11px]" />
        {DAYS.map((d) => <td key={d.letter} className={dayClass(d)}>{d.date}</td>)}
      </tr>
      {PEOPLE.map((p, r) => (
        <tr key={r} className="text-xs leading-[18px] font-bold text-white">
          <RowHead n={r + 10} />
          <td className="border-r border-[#74869a] p-0" />
          <td className="border-r border-b border-[#74869a] p-0 text-center">{p.nr}</td>
          <td colSpan={3} className="border-r border-b border-[#74869a] p-0 pl-2 text-[11px]">{p.name}</td>
          {LEFT_COLUMNS.map((c, i) => (
            <td key={c.letter} className={clsx('border-r border-b border-[#74869a] p-0 text-center', c.bg)}>{p.values[i]}</td>
          ))}
          {DAYS.map((d, i) => {
            const entry = p.entries.find(([from, to]) => i >= from && i <= to)
            if (!entry) return <td key={d.letter} className={dayClass(d)} />
            return (
              <td
                key={d.letter}
                className={clsx('border-r border-b border-b-[#0b0f18] p-0 text-center', CODE_STYLES[entry[2]], entry[2].length > 1 && 'text-[11px]')}
              >
                {entry[2]}
              </td>
            )
          })}
        </tr>
      ))}
    </tbody>
  </table>
)

const VerticalScroll = () => (
  <div className="flex w-[19px] shrink-0 flex-col border-l border-[#b9bec6] bg-[#dfe3e9] text-[#4d525a]">
    <button aria-label="Scroll up" className="flex h-4 items-center pl-1">
      <svg viewBox="0 0 9 5" className="h-[5px] w-[9px]" fill="currentColor"><path d="M4.500 0L9 5H0z" /></svg>
    </button>
    <div className="flex h-[262px] w-[14px] flex-col items-center justify-center gap-[2px] rounded-[2px] border border-[#8d939c] bg-linear-to-r from-[#f5f6f9] to-[#d7dbe3]">
      {[0, 1, 2].map((i) => <span key={i} className="h-px w-2 bg-[#80858d]" />)}
    </div>
    <button aria-label="Scroll down" className="mt-auto flex h-4 items-center pl-1">
      <svg viewBox="0 0 9 5" className="h-[5px] w-[9px]" fill="currentColor"><path d="M0 0h9L4.500 5z" /></svg>
    </button>
  </div>
)

const Slash = () => (
  <svg viewBox="0 0 12 15" className="h-[15px] w-3 shrink-0" stroke="#9ba1aa" fill="none"><path d="M12 0L8 4 2 13l-2 2" /></svg>
)

const SHEETS = [
  { name: 'Meine Kollegen', width: 'w-[100px]' },
  { name: 'Personaldaten', width: 'w-[98px]' },
  { name: 'Einstellungen', width: 'w-[88px]' },
  { name: 'Hilfe', width: 'w-11' },
  { name: 'Mehr erfahren', width: 'w-[98px]' },
]

const ARROWS = [
  { label: 'First sheet', d: 'M1 0v8M7 0v8L3 4z' },
  { label: 'Previous sheet', d: 'M6 0v8L2 4z' },
  { label: 'Next sheet', d: 'M2 0v8l4-4z' },
  { label: 'Last sheet', d: 'M7 0v8M1 0v8l4-4z' },
]

const SheetTabs = () => (
  <div className="flex h-4 items-stretch border-b border-[#8e949d] bg-[#dde2e8] font-['Liberation_Sans',sans-serif] text-[#3d434b]">
    <div className="flex w-[59px] shrink-0 items-center justify-around pr-[2px] pl-[2px]">
      {ARROWS.map((a) => (
        <button key={a.label} aria-label={a.label}>
          <svg viewBox="0 0 8 8" className="h-2 w-2" fill="#4d525a" stroke="#4d525a" strokeWidth=".6"><path d={a.d} /></svg>
        </button>
      ))}
    </div>
    <button className="flex w-[79px] items-center justify-between bg-white pl-2 text-xs font-bold text-black [clip-path:polygon(0_0,100%_0,86%_100%,0_100%)]">
      Übersicht
    </button>
    {SHEETS.map((s) => (
      <button key={s.name} className={clsx('flex items-center justify-between pl-[6px] whitespace-nowrap', s.width)}>
        {s.name}
        <Slash />
      </button>
    ))}
    <button aria-label="New sheet" className="flex items-center gap-2">
      <svg viewBox="0 0 16 13" className="h-[13px] w-4">
        <path d="M4 4h10v7l-2 1H4z" fill="#f5f8fd" stroke="#6580ad" />
        <path d="M3.500 0v7M0 3.500h7M1 1l5 5M6 1L1 6" stroke="#e08a2c" />
      </svg>
      <Slash />
    </button>
    <div className="ml-auto flex w-[523px] items-center">
      <span className="h-[14px] w-[6px] border border-[#80858d] bg-white" />
      <button aria-label="Scroll left" className="ml-1 px-px">
        <svg viewBox="0 0 5 9" className="h-[9px] w-[5px]" fill="#4d525a"><path d="M5 0v9L0 4.500z" /></svg>
      </button>
      <span className="ml-[5px] flex h-[14px] w-[39px] items-center justify-center gap-px rounded-[2px] border border-[#8d939c] bg-linear-to-b from-white to-[#d7dbe3]">
        {[0, 1, 2, 3].map((i) => <span key={i} className="h-2 w-px bg-[#80858d]" />)}
      </span>
      <button aria-label="Scroll right" className="mr-6 ml-auto">
        <svg viewBox="0 0 5 9" className="h-[9px] w-[5px]" fill="#4d525a"><path d="M0 0v9l5-4.500z" /></svg>
      </button>
    </div>
  </div>
)

const StatusBar = () => (
  <div className="flex h-[22px] items-center border-b border-white bg-linear-to-b from-[#e3e6eb] to-[#bcc1cb] text-[#3d434b]">
    <span className="w-12 pl-2">Ready</span>
    <Divider className="h-4 bg-[#9aa0aa]" />
    <button aria-label="Record macro" className="mx-[9px]">
      <svg viewBox="0 0 15 14" className="h-[14px] w-[15px]">
        <path d="M2 2h12v11H2z" fill="#f5f8fd" stroke="#4463a5" />
        <path d="M2 2h12v3H2z" fill="#5c7fc6" />
        <path d="M4 7.500h8M4 10h8" stroke="#7b93c4" strokeDasharray="2 1" />
        <circle cx="3" cy="3" r="2.500" fill="#b8583c" />
      </svg>
    </button>
    <Divider className="h-4 bg-[#9aa0aa]" />
    <div className="ml-auto flex items-center pr-1">
      <Divider className="mr-1 h-4 bg-[#8e949d]" />
      <button aria-label="Normal view" className="flex h-[18px] w-[18px] items-center justify-center rounded-[2px] border border-[#c08d28] bg-[#ffdf7a]">
        <svg viewBox="0 0 13 11" className="h-[11px] w-[13px]" fill="#fff" stroke="#5a6270"><path d="M.5.5h12v10H.5zM.5 4h12M.5 7h12M4.500.5v10M8.500.5v10" /></svg>
      </button>
      <button aria-label="Page layout view" className="ml-[3px]">
        <svg viewBox="0 0 14 12" className="h-3 w-[14px]" fill="#e6e8ec" stroke="#5a6270"><path d="M.5.5h13v11H.5zM3.500 2.500h7v7h-7zM5.500 5h3M5.500 7h3" /></svg>
      </button>
      <button aria-label="Page break view" className="ml-[5px]">
        <svg viewBox="0 0 14 12" className="h-3 w-[14px]" fill="#e6e8ec" stroke="#5a6270"><path d="M.5.5h13v11H.5zM.5.5h4v7h-4zM4.500.5h4v7h-4z" /></svg>
      </button>
      <span className="ml-3 w-[29px]">70%</span>
      <button aria-label="Zoom out" className="flex h-[15px] w-[15px] items-center justify-center rounded-full border border-[#70757d] bg-white">
        <span className="h-[2px] w-[7px] bg-[#5a6270]" />
      </button>
      <div className="relative flex h-[14px] w-[101px] items-center">
        <span className="h-px w-full bg-[#858b94]" />
        <span className="absolute top-[3px] left-1/2 h-2 w-px bg-[#858b94]" />
        <input type="range" aria-label="Zoom" defaultValue="34" className="absolute inset-0 w-full opacity-0" />
        <svg viewBox="0 0 9 13" className="pointer-events-none absolute left-[31px] h-[13px] w-[9px]" fill="#f4f5f7" stroke="#5a6270"><path d="M.5.5h8v8l-4 4-4-4z" /></svg>
      </div>
      <button aria-label="Zoom in" className="flex h-[15px] w-[15px] items-center justify-center rounded-full border border-[#70757d] bg-white">
        <svg viewBox="0 0 7 7" className="h-[7px] w-[7px]" stroke="#5a6270" strokeWidth="2"><path d="M0 3.500h7M3.500 0v7" /></svg>
      </button>
    </div>
  </div>
)

const raised = 'flex h-[22px] items-center justify-center border-t border-l border-r-2 border-b-2 border-t-white border-l-white border-r-[#57544e] border-b-[#57544e]'

const Taskbar = () => (
  <footer className="flex h-[27px] items-center bg-[#d5d1c8] font-['Liberation_Sans',sans-serif] text-black">
    <button className={clsx(raised, "ml-[2px] w-[52px] gap-px font-['Noto_Sans',sans-serif] text-xs font-bold")}>
      <svg viewBox="0 0 16 15" className="h-[15px] w-4 shrink-0">
        <path d="M3 2c2-1 3-1 5 0L7 7c-2-1-3-1-5 0z" fill="#e5582b" />
        <path d="M9 2c2 1 4 1 6 0l-1 5c-2 1-4 1-6 0z" fill="#86b93c" />
        <path d="M2 8c2-1 3-1 5 0l-1 5c-2-1-3-1-5 0z" fill="#3f86d2" />
        <path d="M8 8c2 1 4 1 6 0l-1 5c-2 1-4 1-6 0z" fill="#f2c230" />
      </svg>
      Start
    </button>
    <button aria-label="Internet Explorer" className={clsx(raised, 'ml-[9px] w-8')}>
      <svg viewBox="0 0 18 18" className="h-[18px] w-[18px]" fill="none">
        <path d="M14 12c-2 4-9 4-10-2-.5-7 10-8 10 0H5" stroke="#2f9be0" strokeWidth="2.500" />
        <path d="M2 16c-3-3 8-15 14-14" stroke="#f0bd34" strokeWidth="1.500" />
      </svg>
    </button>
    <button aria-label="Explorer" className={clsx(raised, 'ml-[2px] w-8')}>
      <svg viewBox="0 0 18 17" className="h-[17px] w-[18px]">
        <path d="M2 3h5l2 2h7v9H2z" fill="#f7dc83" stroke="#c9a248" />
        <path d="M4 10h10v6h-3v-3H7v3H4z" fill="#8cc4e8" stroke="#4f93bd" />
      </svg>
    </button>
    <button aria-label="Media Player" className="ml-[10px]">
      <svg viewBox="0 0 17 17" className="h-[17px] w-[17px]">
        <path d="M1 1h15v15H1z" fill="#9ecdf0" stroke="#5c95c4" />
        <circle cx="8.500" cy="8.500" r="6" fill="#f08a1d" stroke="#fff" />
        <path d="M7 5.500v6l4.500-3z" fill="#fff" />
      </svg>
    </button>
    <button aria-label="Chrome" className="ml-[18px]">
      <svg viewBox="0 0 16 16" className="h-[15px] w-[15px]">
        <circle cx="8" cy="8" r="7.500" fill="#f4c430" />
        <path d="M8 8L1.500 4.200A7.500 7.500 0 0114.500 4.500H8z" fill="#dd4b39" />
        <path d="M8 8L1.500 4.200A7.500 7.500 0 007.500 15.500L10.500 10z" fill="#35a156" />
        <circle cx="8" cy="8" r="3.500" fill="#fff" /><circle cx="8" cy="8" r="2.700" fill="#4285f4" />
      </svg>
    </button>
    <button aria-label="Opera" className="ml-[18px]">
      <svg viewBox="0 0 16 16" className="h-4 w-4"><circle cx="8" cy="8" r="7.500" fill="#b3151b" /><ellipse cx="8" cy="8" rx="2.500" ry="5.500" fill="#e9d5d3" stroke="#7d0b10" /></svg>
    </button>
    <button aria-label="Excel" className="ml-[11px] flex h-[22px] w-[31px] items-center justify-center border border-t-[#57544e] border-r-white border-b-white border-l-[#57544e] bg-white">
      <ExcelIcon />
    </button>
    <div className="mr-[2px] ml-auto flex h-[22px] items-center border border-t-[#88857e] border-r-white border-b-white border-l-[#88857e] pl-[6px] text-[11px]">
      <svg viewBox="0 0 7 10" className="h-[10px] w-[7px]" fill="none" stroke="#111" strokeWidth="1.400"><path d="M1 4l2.500-3L6 4M1 9l2.500-3L6 9" /></svg>
      <svg viewBox="0 0 17 15" className="ml-[10px] h-[15px] w-[17px]" fill="#f6f6f4" stroke="#63625f"><path d="M1 5h3l4-4v13l-4-4H1z" /><path d="M10 5c2 2 2 3 0 5M12 3c3 3 3 6 0 9M14 2c3 4 3 7 0 11" fill="none" stroke="#8a8985" /></svg>
      <svg viewBox="0 0 16 15" className="ml-2 h-[15px] w-4" fill="#f6f6f4" stroke="#4f4e4b"><path d="M5.500 2.500h10v9h-10zM1 1h4v5H1zM3 6v8" /><path d="M11 7l4.500 7.500h-9z" fill="#f5cd2c" stroke="#9d7d10" /><path d="M11 9.500v3" stroke="#222" /></svg>
      <svg viewBox="0 0 16 15" className="ml-2 h-[15px] w-4" fill="#f6f6f4" stroke="#63625f"><path d="M1.500 0v15M1.500 1.500h7v6h-7zM8.500 3.500h5l1.500-1v5l-4 2-2.500-2" /></svg>
      <span className="ml-4">8:47 AM</span>
      <svg viewBox="0 0 16 13" className="ml-3 h-[13px] w-4"><path d="M1 1h14v10H1z" fill="#2f7fdc" stroke="#1b4374" /><path d="M1 11l14-7v7z" fill="#1b55a8" /></svg>
    </div>
  </footer>
)

const Watermark = () => (
  <div className="pointer-events-none absolute right-[48px] bottom-[50px] flex items-center gap-[6px] font-['Roboto',sans-serif] text-[32px] leading-none text-white opacity-50">
    <span>ANY</span>
    <svg viewBox="0 0 56 60" className="h-[60px] w-14" fill="none" stroke="#fff" strokeWidth="3">
      <path d="M9 8H5q-3 0-3 4v42h6M14 2v42M14 2l38 22q3 4 0 7L14 56v-6l30-20L17 14" />
    </svg>
    <span>RUN</span>
  </div>
)

export default function App() {
  return (
    <div className="relative flex min-h-screen flex-col overflow-hidden bg-[#d5d1c8] font-['Noto_Sans',sans-serif] text-[11px]">
      <TitleBar />
      <RibbonTabs />
      <Ribbon />
      <main className="flex border-t-[3px] border-[#c9cdd6]">
        <div className="min-w-0 flex-1 overflow-hidden">
          <Sheet />
        </div>
        <VerticalScroll />
      </main>
      <SheetTabs />
      <StatusBar />
      <Taskbar />
      <Watermark />
    </div>
  )
}
